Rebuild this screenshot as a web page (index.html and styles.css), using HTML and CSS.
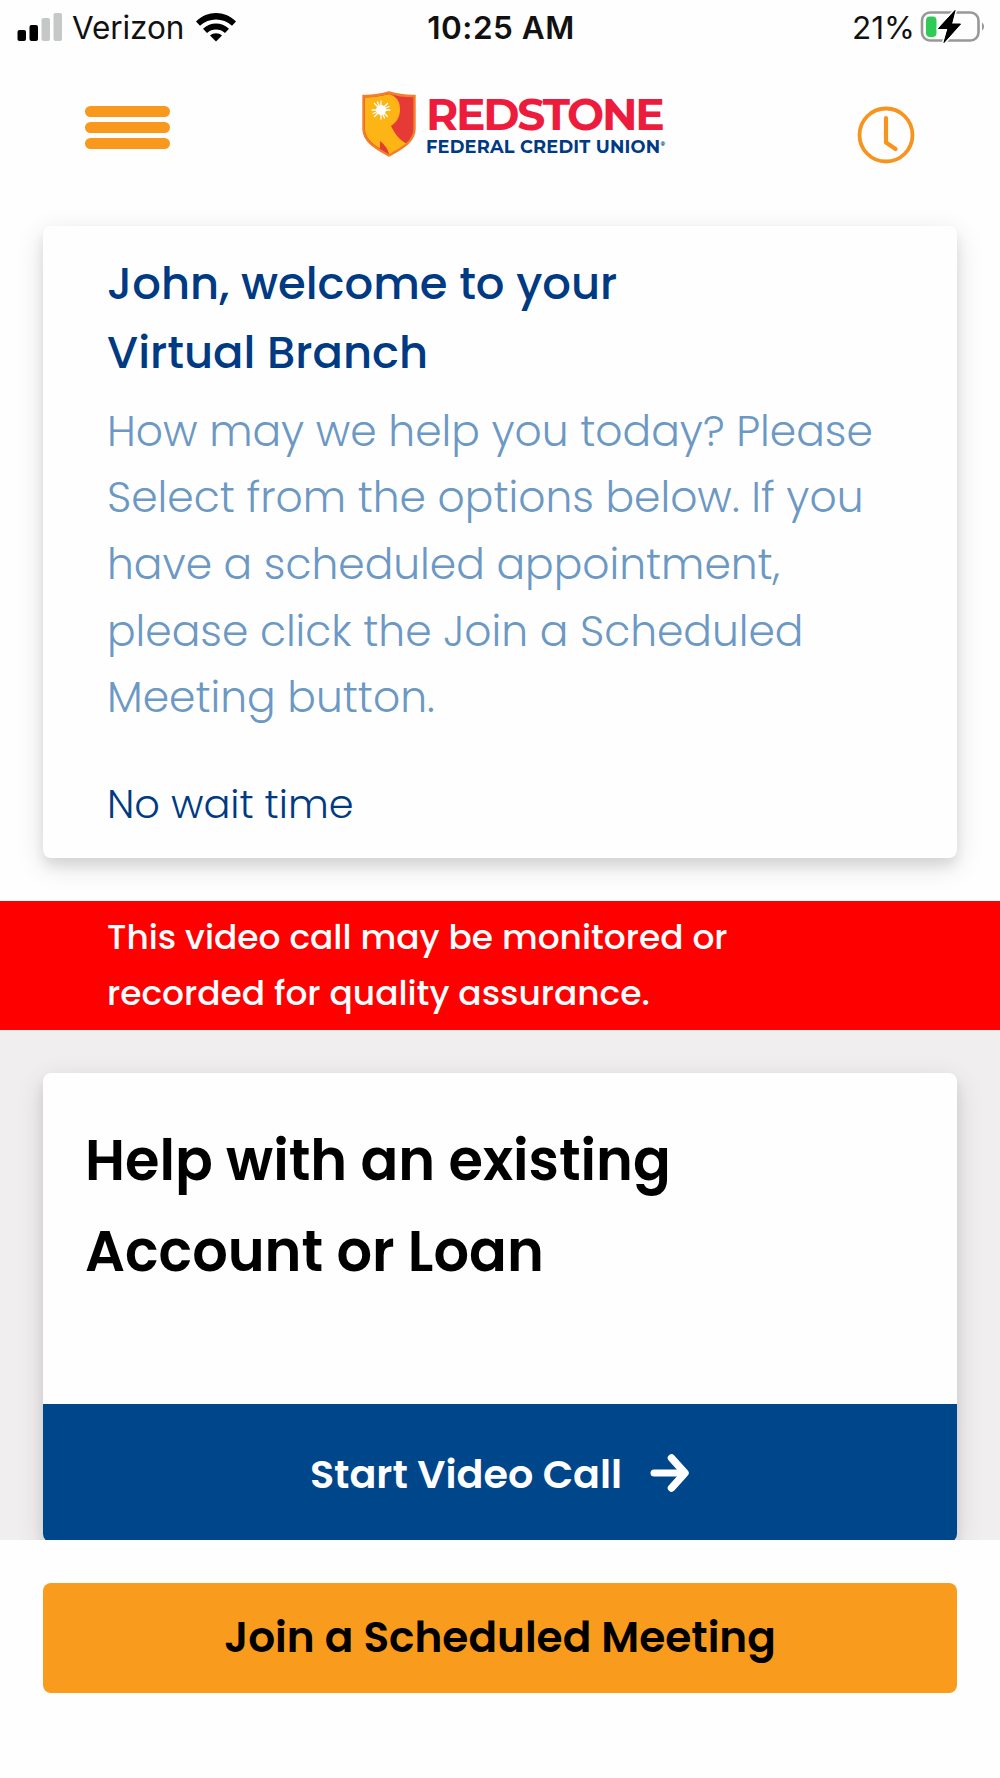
FILE: index.html
```
<!DOCTYPE html>
<html lang="en">

<head>
    <meta charset="UTF-8">
    <meta name="viewport" content="width=device-width, initial-scale=1.0">
    <title>Virtual Branch - Redstone Federal Credit Union</title>
    <link rel="stylesheet" href="styles.css">
</head>

<body>
    <div class="status-bar">
        <div class="status-left">
            <svg class="signal" width="46" height="30" viewBox="0 0 46 30">
                <rect x="0.5" y="18" width="8.5" height="11" rx="2" fill="#000"/>
                <rect x="12.5" y="13" width="8.5" height="16" rx="2" fill="#000"/>
                <rect x="24.5" y="6" width="8.5" height="23" rx="2" fill="#c6c7c7"/>
                <rect x="36.5" y="1" width="8.5" height="28" rx="2" fill="#c6c7c7"/>
            </svg>
            <span>Verizon</span>
            <svg class="wifi" width="42" height="30" viewBox="0 0 42 30">
                <path d="M1 9.5C12.5-1.7 29.5-1.7 41 9.5L37 13.8C28 5.3 14 5.3 5 13.8Z" fill="#000"/>
                <path d="M8 16.8C15.5 9.6 26.5 9.6 34 16.8L30 21C25 16.4 17 16.4 12 21Z" fill="#000"/>
                <path d="M15 23.5C18.5 20.5 23.5 20.5 27 23.5L21 29.5Z" fill="#000"/>
            </svg>
        </div>
        <div class="status-time">10:25 AM</div>
        <div class="status-right">
            <span>21%</span>
            <svg class="battery" width="65" height="34" viewBox="0 0 65 34">
                <rect x="2" y="3.5" width="56.5" height="28" rx="8" fill="none" stroke="#989898" stroke-width="2.6"/>
                <path d="M62 13.5C64.7 15 64.7 20 62 21.5Z" fill="#989898"/>
                <rect x="6" y="7.5" width="10.5" height="20.5" rx="4" fill="#2fcb57"/>
                <path d="M35 1.5L18.5 19.5H28L24 33.5L40.5 15H31.5Z" fill="#000" stroke="#fff" stroke-width="4" stroke-linejoin="round" paint-order="stroke"/>
                <path d="M35 1.5L18.5 19.5H28L24 33.5L40.5 15H31.5Z" fill="#000" stroke="#000" stroke-width="1" stroke-linejoin="round"/>
            </svg>
        </div>
    </div>

    <header class="header">
        <div class="menu-btn">
            <span></span>
            <span></span>
            <span></span>
        </div>
        <div class="logo">
            <svg class="shield" width="54" height="66" viewBox="0 0 54 66">
                <path d="M27 1.5C35 4 43 5.2 52.5 5V38C52.5 50 41 57 27 64.5C13 57 1.5 50 1.5 38V5C11 5.2 19 4 27 1.5Z" fill="#e63a36"/>
                <path d="M3 6.5C12 6.3 19 5 27 3.2C34.5 5 38 10 38 18.5C38 26 34.5 31.5 29 35C34 45 39 50.5 46 53C40 57.5 34 60.5 27 63.5C26 59 23 55 18 52V57.5C9 52 3 46 3 38Z" fill="#fdb515"/>
                <path d="M18 50C22 53 26 58 27 63.5C23 62 20.5 60.5 18 59Z" fill="#e63a36"/>
                <path d="M27 1.5C35 4 43 5.2 52.5 5V38C52.5 50 41 57 27 64.5C13 57 1.5 50 1.5 38V5C11 5.2 19 4 27 1.5Z" fill="none" stroke="#f0802a" stroke-width="2.4"/>
                <circle cx="19" cy="19" r="5" fill="#fff"/>
                <path d="M19 10V28M10 19H28M12.5 12.5L25.5 25.5M25.5 12.5L12.5 25.5M15.5 11L22.5 27M27 15.5L11 22.5" stroke="#fff" stroke-width="1.3" stroke-linecap="round"/>
            </svg>
            <div class="logo-text">
                <div class="logo-name">REDSTONE</div>
                <div class="logo-sub">FEDERAL CREDIT UNION<sup>®</sup></div>
            </div>
        </div>
        <svg class="clock" width="58" height="58" viewBox="0 0 58 58" fill="none" stroke="#f7941d">
            <circle cx="29" cy="29" r="26.5" stroke-width="3.8"/>
            <path d="M29 12V36.5L38.500 43" stroke-width="4.2" stroke-linecap="round" stroke-linejoin="round"/>
        </svg>
    </header>

    <div class="card welcome">
        <h1>
            <span>John, welcome to your</span>
            <span>Virtual Branch</span>
        </h1>
        <p class="intro">
            <span>How may we help you today? Please</span>
            <span>Select from the options below. If you</span>
            <span>have a scheduled appointment,</span>
            <span>please click the Join a Scheduled</span>
            <span>Meeting button.</span>
        </p>
        <p class="wait">No wait time</p>
    </div>

    <div class="notice">
        <span>This video call may be monitored or</span>
        <span>recorded for quality assurance.</span>
    </div>

    <main class="options">
        <div class="card option">
            <h2>
                <span>Help with an existing</span>
                <span>Account or Loan</span>
            </h2>
            <a class="start-btn">
                <span>Start Video Call</span>
                <svg width="40" height="40" viewBox="0 0 40 40" fill="none" stroke="#fff" stroke-linecap="round" stroke-linejoin="round">
                    <path d="M4 20H33" stroke-width="7"/>
                    <path d="M21.5 5L35 20L21.5 35" stroke-width="7.5"/>
                </svg>
            </a>
        </div>
    </main>

    <footer class="footer">
        <a class="join-btn">Join a Scheduled Meeting</a>
    </footer>
</body>

</html>
```
FILE: styles.css
```
* {
    box-sizing: border-box;
}

body {
    margin: 0;
    height: 1778px;
    overflow: hidden;
    display: flex;
    flex-direction: column;
    font-family: Poppins, Inter, sans-serif;
    background-color: #fefefe;
    color: #000;
}

h1, h2, p {
    margin: 0;
}

h1 span, h2 span, p span, .notice span {
    display: block;
    white-space: nowrap;
}

svg {
    display: block;
    flex: none;
}

/* Status bar */
.status-bar {
    display: grid;
    grid-template-columns: 1fr auto 1fr;
    align-items: center;
    height: 56px;
    padding: 0 15px 2px 17px;
    font-family: Inter, sans-serif;
    font-size: 31.5px;
    color: #111;
}

.status-left,
.status-right {
    display: flex;
    align-items: center;
}

.status-left span {
    margin-left: 9px;
    letter-spacing: -0.1px;
}

.signal {
    margin-top: -1px;
}

.wifi {
    margin-top: -1px;
    margin-left: 11px;
}

.status-time {
    font-weight: 600;
    letter-spacing: 0.5px;
}

.status-right {
    justify-content: flex-end;
}

.battery {
    margin: -3px 0 0 5px;
}

/* Header */
.header {
    display: flex;
    align-items: flex-start;
    height: 170px;
    padding: 35px 85px 0 85px;
}

.menu-btn {
    display: flex;
    flex-direction: column;
    gap: 5px;
    width: 85px;
    margin-top: 15px;
}

.menu-btn span {
    height: 11px;
    border-radius: 6px;
    background-color: #f8991d;
}

.logo {
    display: flex;
    margin-left: 192px;
}

.logo-text {
    margin-left: 10px;
    white-space: nowrap;
    font-family: Montserrat, Inter, sans-serif;
    font-weight: 700;
}

.logo-name {
    font-size: 44px;
    line-height: 47px;
    letter-spacing: -2.3px;
    color: #ee1c3c;
}

.logo-sub {
    font-size: 17.8px;
    line-height: 18px;
    letter-spacing: 0.2px;
    color: #003a83;
}

.logo-sub sup {
    font-size: 6px;
    line-height: 0;
    vertical-align: 7px;
    letter-spacing: 0;
}

.clock {
    margin-left: auto;
    margin-top: 15px;
}

/* Cards */
.card {
    border-radius: 8px;
    background-color: #fefefe;
    box-shadow: 0 8px 28px rgba(0, 0, 0, 0.13), 0 8px 12px rgba(0, 0, 0, 0.08);
}

.welcome {
    height: 632px;
    margin: 0 43px 43px;
    padding: 22.5px 63px 0 64px;
    color: #003a83;
}

.welcome h1 {
    font-size: 44.9px;
    font-weight: 500;
    line-height: 69px;
}

.intro {
    margin-top: 11px;
    font-size: 42.4px;
    font-weight: 300;
    line-height: 66.7px;
    color: #6c98c4;
}

.wait {
    margin-top: 43px;
    font-size: 39.9px;
    font-weight: 300;
    line-height: 60px;
}

/* Recording notice */
.notice {
    height: 129px;
    padding: 8px 107px 0;
    font-size: 34.4px;
    font-weight: 500;
    line-height: 56px;
    background-color: #ff0000;
    color: #fff;
}

/* Options */
.options {
    height: 510px;
    padding: 43px 43px 0;
    overflow: hidden;
    background-color: #f0eeef;
}

.option {
    display: flex;
    flex-direction: column;
    height: 469px;
}

.option h2 {
    height: 331px;
    padding: 43px 42px 0;
    font-size: 55.8px;
    font-weight: 600;
    line-height: 90.5px;
}

.start-btn {
    flex: 1;
    display: flex;
    align-items: center;
    justify-content: center;
    gap: 28px;
    padding-top: 2px;
    border-radius: 0 0 8px 8px;
    font-size: 39.7px;
    font-weight: 600;
    background-color: #00468b;
    color: #fff;
}

.start-btn svg {
    margin-top: -3px;
}

/* Footer */
.footer {
    flex: 1;
    padding: 43px;
    background-color: #fefefe;
}

.join-btn {
    display: flex;
    align-items: center;
    justify-content: center;
    height: 109.5px;
    border-radius: 8px;
    font-size: 42.2px;
    font-weight: 600;
    background-color: #f99b1c;
}
```
